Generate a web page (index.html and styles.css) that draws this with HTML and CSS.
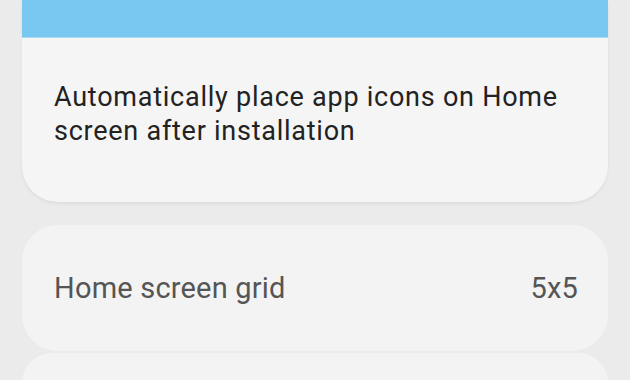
FILE: index.html
```html
<!DOCTYPE html>
<html lang="en">
<head>
    <meta charset="UTF-8">
    <title>Home screen settings</title>
    <link rel="stylesheet" href="styles.css">
</head>
<body>
    <div class="settings">
        <!-- preview card -->
        <div class="card card-preview">
            <div class="preview-band"></div>
            <p class="preview-text">Automatically place app icons on Home screen after installation</p>
        </div>
        <div class="card card-row">
            <span class="row-label">Home screen grid</span>
            <span class="row-value">5x5</span>
        </div>
        <div class="card card-next"></div>
    </div>
</body>
</html>
```

FILE: styles.css
```css
* {
    box-sizing: border-box;
    margin: 0;
    padding: 0;
    font-family: Roboto, 'Noto Sans', sans-serif;
}

body {
    background: #ebebeb;
    overflow: hidden;
    height: 380px;
}

.settings {
    padding: 0 22px;
}

.card {
    background: #f5f5f5;
    border-radius: 36px;
}

.card-preview {
    border-radius: 0 0 36px 36px;
    overflow: hidden;
    box-shadow: 0 2px 3px rgba(0, 0, 0, 0.06);
}

.preview-band {
    height: 38px;
    background: #78c8f2;
    border-bottom: 1px solid #a9dcf6;
}

.preview-text {
    padding: 42px 32px 54px;
    font-size: 27px;
    line-height: 34px;
    letter-spacing: 0.75px;
    color: #222;
}

.card-row {
    margin-top: 23px;
    height: 126px;
    display: flex;
    justify-content: space-between;
    align-items: center;
    padding: 0 30px 0 32px;
    background: #f3f3f3;
    font-size: 29px;
    letter-spacing: 0.2px;
    color: #555;
}

.card-next {
    margin-top: 2px;
    height: 60px;
    background: #f3f3f3;
}
```
